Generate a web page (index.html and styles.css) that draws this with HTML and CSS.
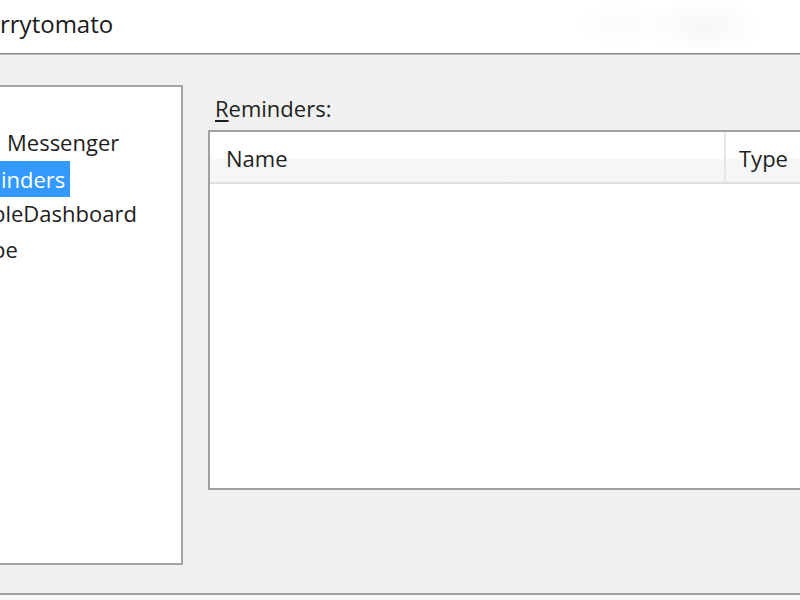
FILE: index.html
```html
<!DOCTYPE html>
<html>
<head>
<meta charset="utf-8">
<link rel="stylesheet" href="styles.css">
</head>
<body>
<div class="titlebar"><span class="title">rrytomato</span></div>
<div class="main">
  <div class="tree">
    <div class="item item-msg">Messenger</div>
    <div class="item"><span class="sel">inders</span></div>
    <div class="item item-cut">bleDashboard</div>
    <div class="item item-cut">pe</div>
  </div>
  <div class="rightcol">
    <div class="label"><span class="acc">R</span>eminders:</div>
    <div class="listview">
      <div class="header">
        <div class="col col-name">Name</div>
        <div class="col col-type">Type</div>
      </div>
    </div>
  </div>
</div>
<div class="footer"></div>
</body>
</html>
```

FILE: styles.css
```css
html, body {
  margin: 0;
  padding: 0;
}
body {
  width: 800px;
  height: 600px;
  overflow: hidden;
  background: #f8f8f8;
  font-family: "Open Sans", "Noto Sans", sans-serif;
  font-size: 22px;
  color: #1e1e1e;
}
.titlebar {
  height: 44px;
  padding-top: 9px;
  background:
    radial-gradient(ellipse 60px 28px at 705px 26px, rgba(0,0,0,0.035), rgba(0,0,0,0) 100%),
    radial-gradient(ellipse 50px 22px at 620px 24px, rgba(0,0,0,0.02), rgba(0,0,0,0) 100%),
    #ffffff;
  border-bottom: 1px solid #858585;
  line-height: 30px;
  font-size: 24px;
  color: #1a1a1a;
  white-space: nowrap;
}
.title {
  display: inline-block;
}
.main {
  box-sizing: border-box;
  height: 539px;
  border-top: 1px solid #bdbdbd;
  background: #f0f0f0;
  padding-top: 30px;
  display: flex;
  align-items: flex-start;
  overflow: hidden;
}
.tree {
  flex: none;
  box-sizing: border-box;
  width: 185px;
  height: 480px;
  margin-left: -2px;
  border: 2px solid #a3a3a3;
  background: #ffffff;
  padding-top: 38px;
  overflow: hidden;
  white-space: nowrap;
}
.item {
  height: 35.5px;
  line-height: 35.5px;
}
.item-msg {
  padding-left: 7px;
}
.item-cut {
  text-indent: -8px;
}
.sel {
  display: inline-block;
  height: 36px;
  line-height: 36px;
  background: #3399ff;
  color: #ffffff;
  padding: 0 5px 0 1px;
}
.rightcol {
  flex: none;
  width: 640px;
  margin-left: 25px;
}
.label {
  height: 43px;
  padding-top: 2px;
  line-height: 43px;
  padding-left: 7px;
  color: #1e1e1e;
}
.acc {
  text-decoration: underline;
  text-decoration-thickness: 2px;
  text-underline-offset: 3px;
}
.listview {
  box-sizing: border-box;
  height: 360px;
  border: 2px solid #a0a0a0;
  background: #ffffff;
}
.header {
  display: flex;
  height: 50px;
  border-bottom: 2px solid #dedede;
  background: linear-gradient(#ffffff 0%, #ffffff 55%, #f6f7f8 55%, #f4f5f6 100%);
}
.col {
  box-sizing: border-box;
  height: 50px;
  padding-top: 3px;
  line-height: 47px;
  color: #1e1e1e;
}
.col-name {
  width: 516px;
  padding-left: 16px;
  border-right: 2px solid #e6e6e6;
}
.col-type {
  padding-left: 13px;
}
.footer {
  height: 5px;
  border-top: 2px solid #a0a0a0;
  background: #f7f7f7;
}
```
